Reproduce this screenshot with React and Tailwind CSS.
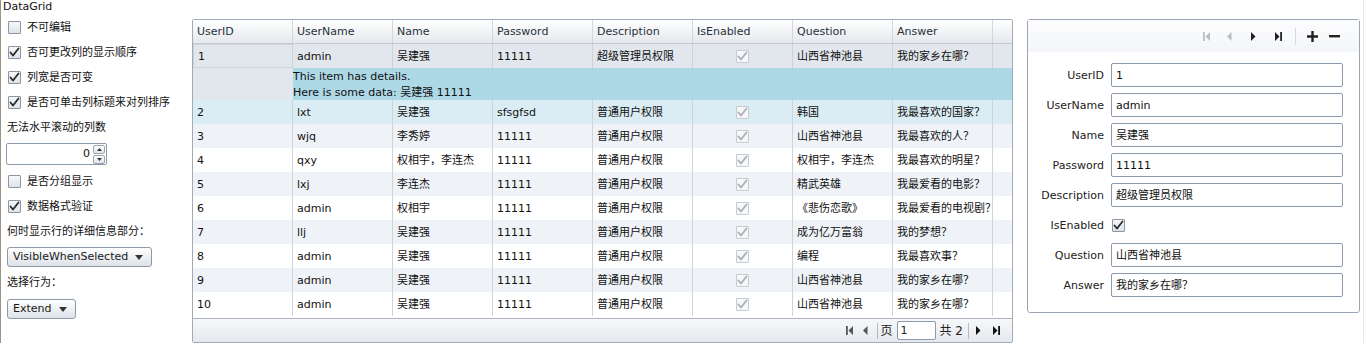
import React from 'react';

const FONT = { fontFamily: '"DejaVu Sans", "Noto Sans CJK SC", sans-serif' };

const rows = [
  ['1', 'admin', '吴建强', '11111', '超级管理员权限', '山西省神池县', '我的家乡在哪？'],
  ['2', 'lxt', '吴建强', 'sfsgfsd', '普通用户权限', '韩国', '我最喜欢的国家？'],
  ['3', 'wjq', '李秀婷', '11111', '普通用户权限', '山西省神池县', '我最喜欢的人？'],
  ['4', 'qxy', '权相宇，李连杰', '11111', '普通用户权限', '权相宇，李连杰', '我最喜欢的明星？'],
  ['5', 'lxj', '李连杰', '11111', '普通用户权限', '精武英雄', '我最爱看的电影？'],
  ['6', 'admin', '权相宇', '11111', '普通用户权限', '《悲伤恋歌》', '我最爱看的电视剧？'],
  ['7', 'llj', '吴建强', '11111', '普通用户权限', '成为亿万富翁', '我的梦想？'],
  ['8', 'admin', '吴建强', '11111', '普通用户权限', '编程', '我最喜欢事？'],
  ['9', 'admin', '吴建强', '11111', '普通用户权限', '山西省神池县', '我的家乡在哪？'],
  ['10', 'admin', '吴建强', '11111', '普通用户权限', '山西省神池县', '我的家乡在哪？'],
];

const headers = ['UserID', 'UserName', 'Name', 'Password', 'Description', 'IsEnabled', 'Question', 'Answer'];

const CheckMark = ({ color = '#222' }) => (
  <svg width="11" height="11" viewBox="0 0 11 11" className="absolute left-[0px] top-[0px]">
    <path d="M1.5 5.5 L4 8.5 L9.5 1.5" fill="none" stroke={color} strokeWidth="1.8" strokeLinecap="round" strokeLinejoin="round" />
  </svg>
);

const Checkbox = ({ checked, disabled }) => (
  <div
    className={`relative w-[13px] h-[13px] border rounded-[1px] shrink-0 ${
      disabled ? 'border-[#c6cbd1] bg-[#f6f7f8]' : 'border-[#8a96a3] bg-gradient-to-b from-[#f6f7f9] to-[#dfe3e8]'
    }`}
  >
    {checked && <CheckMark color={disabled ? '#a9aeb4' : '#2a2a2a'} />}
  </div>
);

const CheckRow = ({ label, checked }) => (
  <div className="h-[25px] flex items-center gap-[6px] pl-[7px]">
    <Checkbox checked={checked} />
    <span className="pt-[2px]">{label}</span>
  </div>
);

const Triangle = () => (
  <svg width="8" height="5" viewBox="0 0 8 5"><path d="M0 0 L8 0 L4 5 Z" fill="#333" /></svg>
);

const Dropdown = ({ label, w }) => (
  <div className={`${w} h-[20px] ml-[6px] flex items-center justify-between px-[5px] border border-[#8f9aa7] rounded-[3px] bg-gradient-to-b from-[#ffffff] to-[#dde2e8]`}>
    <span className="text-[#1a1a1a] pt-[1px]">{label}</span>
    <span className="mr-[3px]"><Triangle /></span>
  </div>
);

const PagerIcon = ({ type, color = '#333' }) => {
  const d = {
    first: 'M0 0 H1.8 V9 H0 Z M7 0 V9 L2.5 4.5 Z',
    prev: 'M4.5 0 V9 L0 4.5 Z',
    next: 'M0 0 V9 L4.5 4.5 Z',
    last: 'M0 0 V9 L4.5 4.5 Z M5.2 0 H7 V9 H5.2 Z',
  }[type];
  return (
    <svg width="7" height="9" viewBox="0 0 7 9"><path d={d} fill={color} /></svg>
  );
};

const Field = ({ label, value }) => (
  <div className="h-[24px] flex items-center">
    <div className="w-[76px] text-right pr-[7px] pt-[2px] text-[#222] whitespace-nowrap">{label}</div>
    <div className="w-[232px] h-[24px] flex items-center px-[4px] pt-[2px] border border-[#8c9aab] rounded-[2px] bg-white text-[#111]">
      {value}
    </div>
  </div>
);

export default function App() {
  return (
    <div className="w-[1364px] h-[343px] bg-white border-l border-[#9a9488] border-r border-r-[#ece8d2] text-[11px] text-[#111] overflow-hidden" style={FONT}>
      <div className="h-[15px] pl-[2px] leading-[14px] text-[11px]">DataGrid</div>
      <div className="flex">
        {/* left options column */}
        <div className="w-[191px] shrink-0 flex flex-col">
          <CheckRow label="不可编辑" checked={false} />
          <CheckRow label="否可更改列的显示顺序" checked />
          <CheckRow label="列宽是否可变" checked />
          <CheckRow label="是否可单击列标题来对列排序" checked />
          <div className="h-[24px] flex items-center pl-[6px] pt-[2px]">无法水平滚动的列数</div>
          <div className="mt-[4px] ml-[5px] w-[101px] h-[22px] flex items-center justify-end border border-[#8c9aab] rounded-[2px] bg-white pr-[1px]">
            <span className="mr-[3px] pt-[1px]">0</span>
            <div className="flex flex-col gap-[1px]">
              <div className="w-[12px] h-[9px] border border-[#9aa5b1] rounded-[2px] bg-gradient-to-b from-white to-[#dfe3e8] flex items-center justify-center">
                <svg width="5" height="3" viewBox="0 0 5 3"><path d="M0 3 L5 3 L2.5 0 Z" fill="#333" /></svg>
              </div>
              <div className="w-[12px] h-[9px] border border-[#9aa5b1] rounded-[2px] bg-gradient-to-b from-white to-[#dfe3e8] flex items-center justify-center">
                <svg width="5" height="3" viewBox="0 0 5 3"><path d="M0 0 L5 0 L2.5 3 Z" fill="#333" /></svg>
              </div>
            </div>
          </div>
          <div className="mt-[4px]">
            <CheckRow label="是否分组显示" checked={false} />
            <CheckRow label="数据格式验证" checked />
          </div>
          <div className="h-[24px] flex items-center pl-[6px] pt-[2px]">何时显示行的详细信息部分：</div>
          <div className="mt-[4px]"><Dropdown label="VisibleWhenSelected" w="w-[145px]" /></div>
          <div className="mt-[3px] h-[24px] flex items-center pl-[6px] pt-[2px]">选择行为：</div>
          <div className="mt-[5px]"><Dropdown label="Extend" w="w-[69px]" /></div>
        </div>

        {/* data grid */}
        <div className="mt-[4px] w-[821px] h-[324px] shrink-0 border border-[#a0abb8] rounded-[2px] flex flex-col overflow-hidden">
          <div className="h-[24px] flex border-b border-[#c5cad0] bg-gradient-to-b from-[#ffffff] to-[#e5e8ec] text-[#27313d]">
            {headers.map(h => (
              <div key={h} className="w-[100px] shrink-0 border-r border-[#d3d7dc] flex items-center pl-[4px] pt-[2px]">{h}</div>
            ))}
            <div className="flex-1" />
          </div>
          <div className="h-[274px]">
            {rows.map((r, i) => {
              const bg = i === 0 ? 'bg-[#e2e7ee]' : i === 1 ? 'bg-[#dbedf4]' : i % 2 === 0 ? 'bg-[#eff3f8]' : 'bg-white';
              return (
                <React.Fragment key={r[0]}>
                  <div className={`h-[24px] flex ${bg}`}>
                    {r.slice(0, 5).map((c, j) => (
                      <div
                        key={j}
                        className={`w-[100px] shrink-0 flex items-center pl-[4px] pt-[2px] whitespace-nowrap overflow-hidden border-r border-[#cfd2d6] ${
                          i === 0 && j === 0 ? 'border border-[#7cc3d8] pl-[3px]' : ''
                        }`}
                      >
                        {c}
                      </div>
                    ))}
                    <div className="w-[100px] shrink-0 flex items-center justify-center border-r border-[#cfd2d6]">
                      <Checkbox checked disabled />
                    </div>
                    {r.slice(5).map((c, j) => (
                      <div key={j} className="w-[100px] shrink-0 flex items-center pl-[4px] pt-[2px] whitespace-nowrap overflow-hidden border-r border-[#cfd2d6]">{c}</div>
                    ))}
                    <div className="flex-1" />
                  </div>
                  {i === 0 && (
                    <div className="h-[32px] flex">
                      <div className="w-[100px] shrink-0 bg-[#e2e7ee]" />
                      <div className="flex-1 bg-[#add8e6] leading-[16px] pt-[1px]">
                        <div>This item has details.</div>
                        <div>Here is some data: 吴建强 11111</div>
                      </div>
                    </div>
                  )}
                </React.Fragment>
              );
            })}
          </div>
          <div className="flex-1 border-t border-[#a8b1bc] bg-gradient-to-b from-[#f7f8fa] to-[#e6e9ed] flex items-center justify-end pr-[6px] text-[#222]">
            <div className="flex items-center">
              <div className="w-[21px] flex justify-center"><PagerIcon type="first" color="#555" /></div>
              <div className="w-[14px] flex justify-center"><PagerIcon type="prev" color="#555" /></div>
              <div className="w-[1px] h-[16px] bg-[#b5bcc5] mx-[3px]" />
              <span className="mr-[4px] text-[12px] pt-[1px]">页</span>
              <div className="w-[39px] h-[19px] border border-[#8c9aab] rounded-[2px] bg-white flex items-center pl-[3px] pt-[1px]">1</div>
              <span className="ml-[4px] text-[12px] pt-[1px]">共 2</span>
              <div className="w-[1px] h-[16px] bg-[#b5bcc5] ml-[5px] mr-[3px]" />
              <div className="w-[14px] flex justify-center"><PagerIcon type="next" color="#111" /></div>
              <div className="w-[20px] flex justify-center"><PagerIcon type="last" color="#111" /></div>
            </div>
          </div>
        </div>

        {/* detail form */}
        <div className="mt-[4px] ml-[14px] w-[333px] h-[294px] shrink-0 border border-[#9aa6b3] rounded-[3px] bg-white flex flex-col">
          <div className="h-[32px] bg-gradient-to-b from-[#fdfdfe] to-[#f3f5f8] flex items-center justify-end pr-[14px]">
            <div className="w-[24px] flex justify-center"><PagerIcon type="first" color="#b9bec5" /></div>
            <div className="w-[24px] flex justify-center"><PagerIcon type="prev" color="#b9bec5" /></div>
            <div className="w-[24px] flex justify-center"><PagerIcon type="next" color="#222" /></div>
            <div className="w-[24px] flex justify-center"><PagerIcon type="last" color="#222" /></div>
            <div className="w-[1px] h-[17px] bg-[#d6dbe1] mx-[5px]" />
            <div className="w-[22px] flex justify-center">
              <svg width="11" height="11" viewBox="0 0 11 11"><path d="M4.3 0 H6.7 V4.3 H11 V6.7 H6.7 V11 H4.3 V6.7 H0 V4.3 H4.3 Z" fill="#222" /></svg>
            </div>
            <div className="w-[22px] flex justify-center">
              <svg width="11" height="3" viewBox="0 0 11 3"><rect width="11" height="2.4" fill="#222" /></svg>
            </div>
          </div>
          <div className="pt-[11px] pl-[7px] flex flex-col gap-[6px]">
            <Field label="UserID" value="1" />
            <Field label="UserName" value="admin" />
            <Field label="Name" value="吴建强" />
            <Field label="Password" value="11111" />
            <Field label="Description" value="超级管理员权限" />
            <div className="h-[24px] flex items-center">
              <div className="w-[76px] text-right pr-[7px] pt-[2px] text-[#222]">IsEnabled</div>
              <div className="ml-[1px]"><Checkbox checked /></div>
            </div>
            <Field label="Question" value="山西省神池县" />
            <Field label="Answer" value="我的家乡在哪？" />
          </div>
        </div>
      </div>
    </div>
  );
}
